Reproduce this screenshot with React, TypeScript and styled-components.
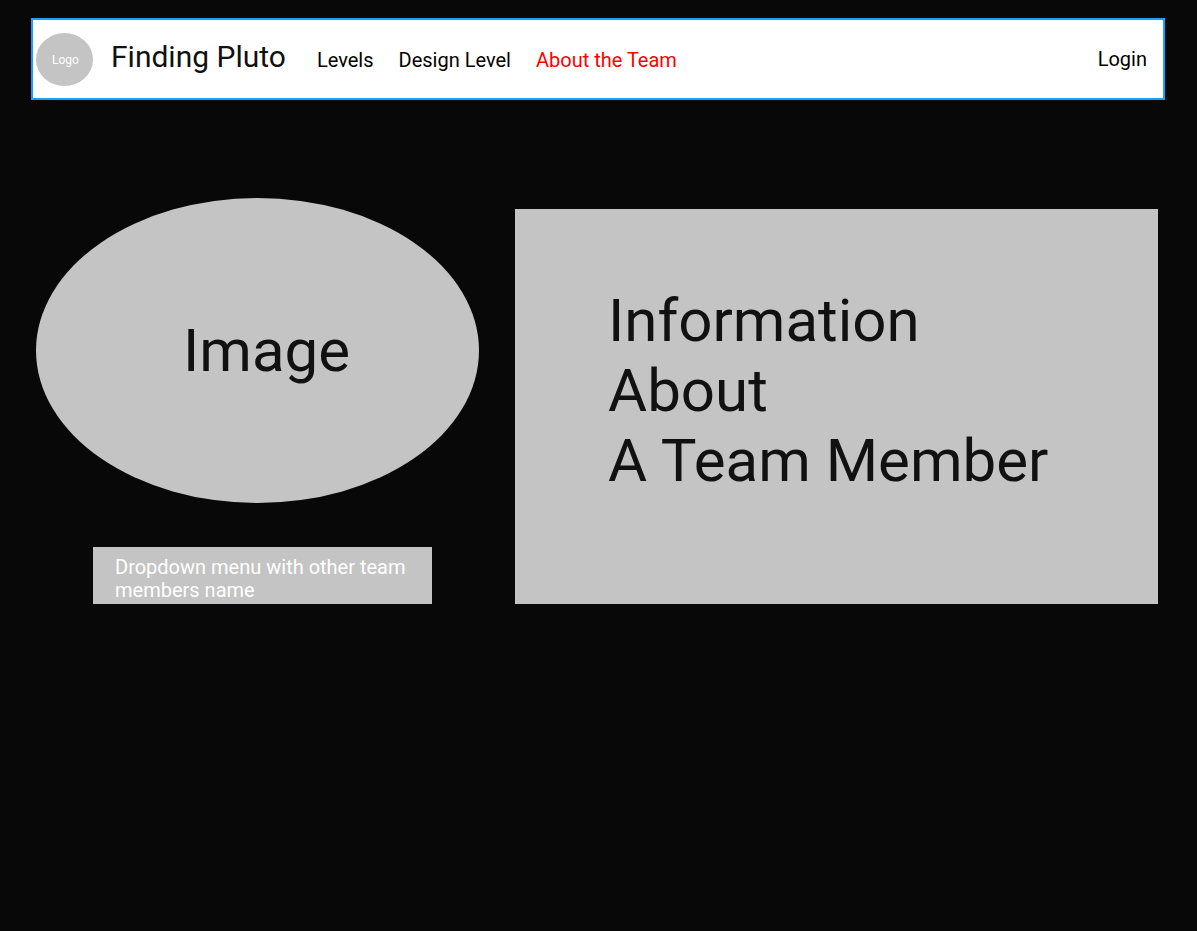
import React from "react";
import styled, { createGlobalStyle } from "styled-components";

const GlobalStyle = createGlobalStyle`
  *, *::before, *::after { box-sizing: border-box; }
  body {
    margin: 0;
    background: #080808;
    color: #111111;
    font-family: Roboto, "Liberation Sans", sans-serif;
  }
`;

const Page = styled.div`
  min-height: 100vh;
  padding: 18px 32px 32px 31px;
`;

const Header = styled.header`
  display: flex;
  align-items: center;
  min-height: 82px;
  padding: 0 16px 0 3px;
  background: #ffffff;
  border: 2px solid #18a0fb;
`;

const Logo = styled.a`
  display: flex;
  flex: none;
  align-items: center;
  justify-content: center;
  width: 57px;
  height: 53px;
  padding: 2px 0 0 2px;
  border-radius: 50%;
  background: #c4c4c4;
  color: #ffffff;
  font-size: 12px;
  line-height: 14px;
  text-decoration: none;
`;

const Navigation = styled.nav`
  display: flex;
  flex: 1;
  align-items: baseline;
  padding: 0 0 5px 18px;
`;

const Brand = styled.span`
  margin-right: 31px;
  font-size: 30px;
  line-height: 35px;
`;

const Links = styled.ul`
  display: flex;
  gap: 25px;
  margin: 0;
  padding: 0;
  list-style: none;
`;

const NavLink = styled.a<{ $active?: boolean }>`
  color: ${({ $active }) => ($active ? "#ff0000" : "#000000")};
  font-size: 20px;
  line-height: 23px;
  text-decoration: none;
`;

const Main = styled.main`
  display: grid;
  grid-template-columns: 443fr 643fr;
  gap: 36px;
  padding: 98px 7px 0 5px;
`;

const Profile = styled.section`
  display: flex;
  flex-direction: column;
  align-items: center;
  gap: 44px;
`;

const Portrait = styled.div`
  display: flex;
  align-items: center;
  justify-content: center;
  width: 100%;
  height: 305px;
  padding-left: 18px;
  border-radius: 50%;
  background: #c4c4c4;
  font-size: 60px;
  line-height: 70px;
`;

const MemberMenu = styled.button`
  width: 100%;
  max-width: 339px;
  min-height: 57px;
  margin-left: 10px;
  padding: 9px 22px 2px;
  border: 0;
  background: #c4c4c4;
  color: #ffffff;
  font-family: inherit;
  font-size: 20px;
  line-height: 23px;
  text-align: left;
  cursor: pointer;
`;

const Details = styled.section`
  margin-top: 11px;
  padding: 77px 93px;
  min-height: 395px;
  background: #c4c4c4;
`;

const DetailsTitle = styled.h1`
  margin: 0;
  font-size: 60px;
  font-weight: 400;
  line-height: 70px;
`;

const links = [
  { label: "Levels", href: "#levels" },
  { label: "Design Level", href: "#design-level" },
  { label: "About the Team", href: "#team", active: true },
];

export default function App() {
  return (
    <>
      <GlobalStyle />
      <Page>
        <Header>
          <Logo href="#home">Logo</Logo>
          <Navigation>
            <Brand>Finding Pluto</Brand>
            <Links>
              {links.map(({ label, href, active }) => (
                <li key={href}>
                  <NavLink href={href} $active={active} aria-current={active ? "page" : undefined}>
                    {label}
                  </NavLink>
                </li>
              ))}
            </Links>
          </Navigation>
          <NavLink href="#login">Login</NavLink>
        </Header>
        <Main>
          <Profile>
            <Portrait>Image</Portrait>
            <MemberMenu type="button" aria-haspopup="listbox">
              Dropdown menu with other team members name
            </MemberMenu>
          </Profile>
          <Details>
            <DetailsTitle>
              Information
              <br />
              About
              <br />A Team Member
            </DetailsTitle>
          </Details>
        </Main>
      </Page>
    </>
  );
}
